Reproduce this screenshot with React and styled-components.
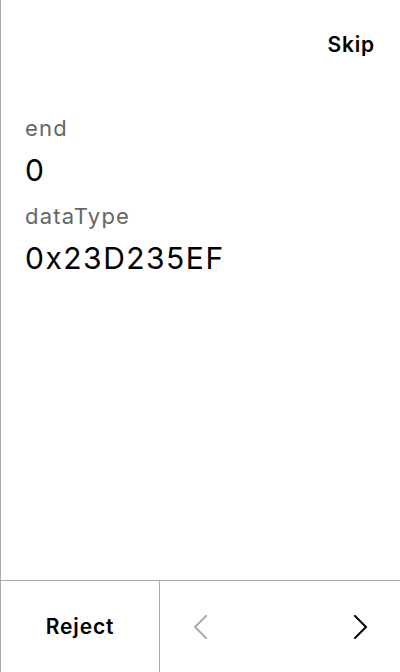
import styled, { createGlobalStyle } from 'styled-components';

const GlobalStyle = createGlobalStyle`
  html, body {
    margin: 0;
    padding: 0;
    background: #fff;
  }
  body {
    font-family: Inter, "Liberation Sans", sans-serif;
    color: #000;
  }
`;

const fields = [
  { label: 'end', value: '0' },
  { label: 'dataType', value: '0x23D235EF' },
];

export default function App() {
  return (
    <>
      <GlobalStyle />
      <Screen>
        <Header>
          <TextButton>Skip</TextButton>
        </Header>
        <Fields>
          {fields.map((f) => (
            <Field key={f.label}>
              <Label>{f.label}</Label>
              <Value>{f.value}</Value>
            </Field>
          ))}
        </Fields>
        <Footer>
          <RejectCell>
            <TextButton>Reject</TextButton>
          </RejectCell>
          <Pager>
            <ArrowButton disabled>
              <Chevron dir="left" />
            </ArrowButton>
            <ArrowButton>
              <Chevron dir="right" />
            </ArrowButton>
          </Pager>
        </Footer>
      </Screen>
    </>
  );
}

function Chevron({ dir }) {
  const d = dir === 'left' ? 'M13 1 L2 12 L13 23' : 'M2 1 L13 12 L2 23';
  return (
    <svg width="15" height="24" viewBox="0 0 15 24" fill="none">
      <path d={d} stroke="currentColor" strokeWidth="2" strokeLinecap="square" />
    </svg>
  );
}

const Screen = styled.div`
  height: 672px;
  display: flex;
  flex-direction: column;
  border-left: 1px solid #aaa;
  box-sizing: border-box;
`;

const Header = styled.div`
  display: flex;
  justify-content: flex-end;
  padding: 31px 25px 0 0;
`;

const TextButton = styled.button`
  border: none;
  background: none;
  padding: 0;
  font-family: Inter, "Liberation Sans", sans-serif;
  font-size: 21px;
  font-weight: 600;
  letter-spacing: 0.04em;
  color: #000;
  line-height: 28px;
`;

const Fields = styled.div`
  flex: 1;
  display: flex;
  flex-direction: column;
  padding: 49px 24px 0 24px;
  gap: 4px;
`;

const Field = styled.div`
  display: flex;
  flex-direction: column;
`;

const Label = styled.div`
  font-size: 22px;
  letter-spacing: 0.055em;
  color: #666;
  line-height: 40px;
`;

const Value = styled.div`
  font-size: 30px;
  letter-spacing: 0.05em;
  color: #000;
  line-height: 44px;
`;

const Footer = styled.div`
  height: 92px;
  display: grid;
  grid-template-columns: 159px 1fr;
  border-top: 1px solid #aaa;
  box-sizing: border-box;
`;

const RejectCell = styled.div`
  display: flex;
  align-items: center;
  justify-content: center;
  border-right: 1px solid #aaa;
`;

const Pager = styled.div`
  display: flex;
  justify-content: space-between;
  align-items: center;
`;

const ArrowButton = styled.button`
  width: 80px;
  height: 100%;
  border: none;
  background: none;
  padding: 0;
  display: flex;
  align-items: center;
  justify-content: center;
  color: ${(p) => (p.disabled ? '#aaa' : '#000')};
`;
